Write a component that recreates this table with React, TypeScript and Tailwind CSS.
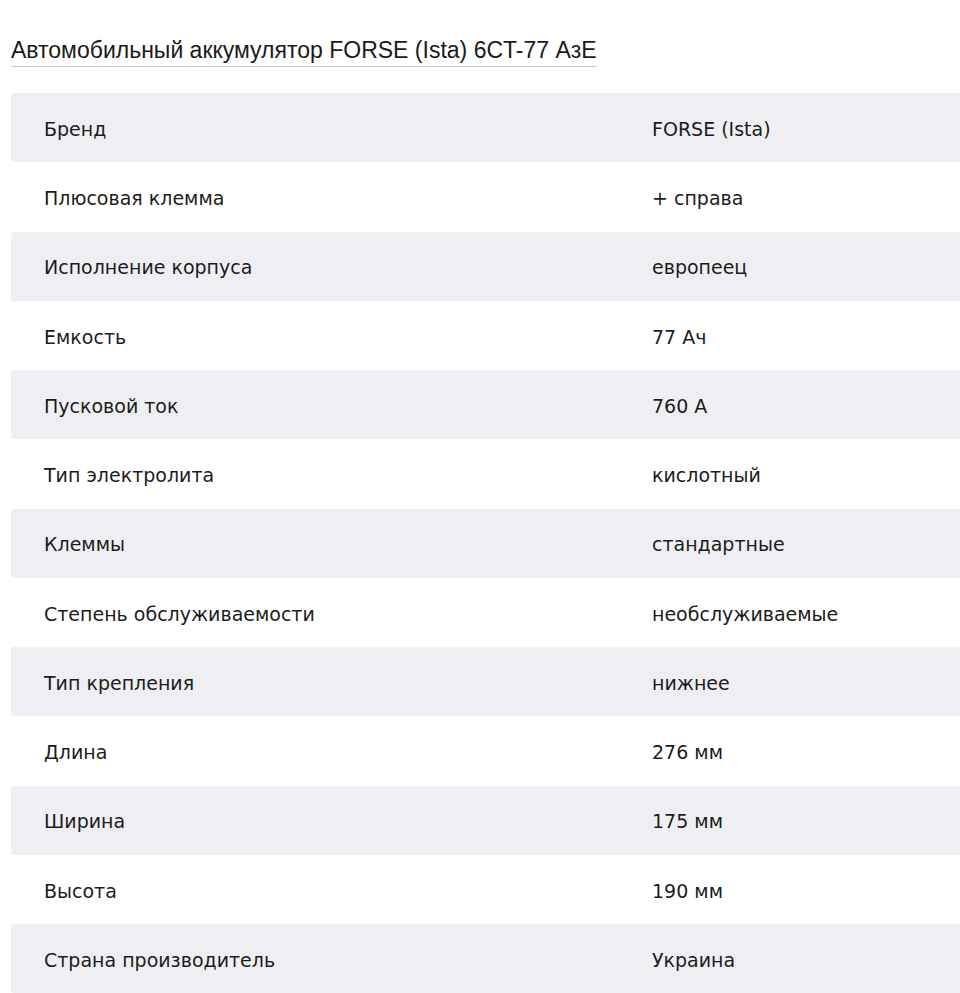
const specs: [string, string][] = [
  ['Бренд', 'FORSE (Ista)'],
  ['Плюсовая клемма', '+ справа'],
  ['Исполнение корпуса', 'европеец'],
  ['Емкость', '77 Ач'],
  ['Пусковой ток', '760 А'],
  ['Тип электролита', 'кислотный'],
  ['Клеммы', 'стандартные'],
  ['Степень обслуживаемости', 'необслуживаемые'],
  ['Тип крепления', 'нижнее'],
  ['Длина', '276 мм'],
  ['Ширина', '175 мм'],
  ['Высота', '190 мм'],
  ['Страна производитель', 'Украина'],
];

export default function App() {
  return (
    <div className="min-h-screen overflow-hidden bg-white pl-[11px] pt-[37px]">
      <h1 className="inline-block border-b border-[#c8c8c8] pb-[3px] font-['Liberation_Sans',Arial,sans-serif] text-[23px] leading-[26px] text-[#1a1a1a]">
        Автомобильный аккумулятор FORSE (Ista) 6CT-77 АзЕ
      </h1>
      <div className="mt-[26px] w-[1000px] font-['DejaVu_Sans',Verdana,sans-serif] text-[19px] text-[#1c1c1c]">
        {specs.map(([label, value], i) => (
          <div
            key={label}
            className={
              'flex h-[69.25px] items-center rounded-[3px] pt-[3px] ' +
              (i % 2 === 0 ? 'bg-[#efeff3]' : 'bg-white')
            }
          >
            <div className="w-[641px] shrink-0 pl-[33px]">{label}</div>
            <div>{value}</div>
          </div>
        ))}
      </div>
    </div>
  );
}
